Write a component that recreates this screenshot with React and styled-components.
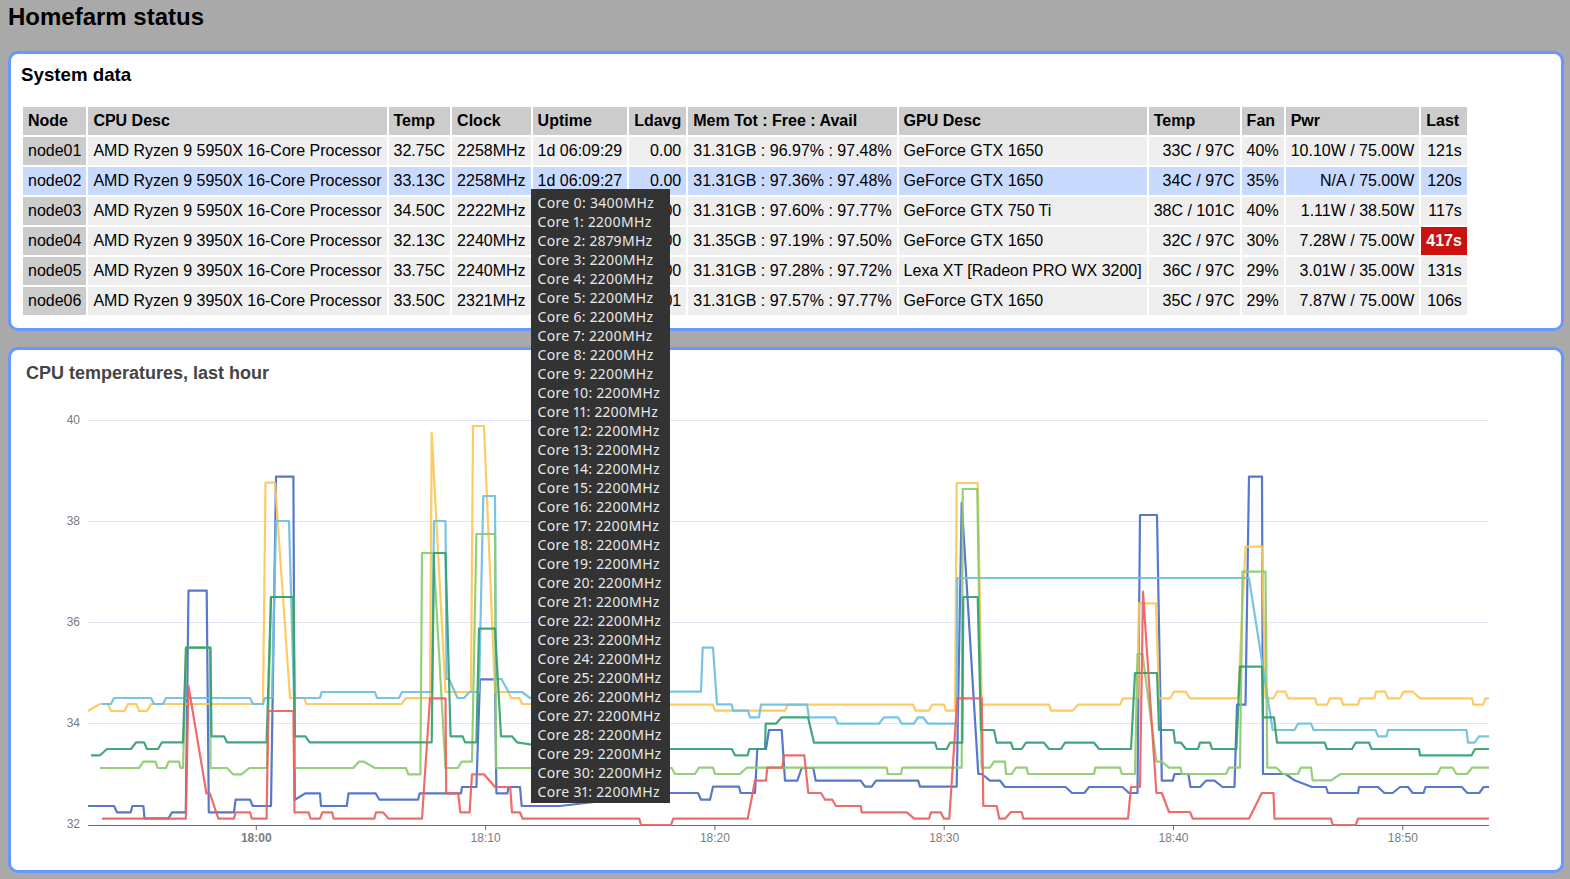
import React from "react";
import styled, { createGlobalStyle } from "styled-components";

const GlobalStyle = createGlobalStyle`
  html, body {
    margin: 0;
    padding: 0;
    background: #a9a9a9;
    font-family: "Liberation Sans", Arial, sans-serif;
  }
`;

const Page = styled.div`
  padding: 0 6px 6px 8px;
`;

const Heading = styled.h1`
  margin: 0;
  height: 51px;
  padding-top: 3px;
  box-sizing: border-box;
  font-size: 24px;
  line-height: 28px;
  font-weight: bold;
  color: #000;
`;

const Panel = styled.div`
  background: #fff;
  border: 3px solid #6699ff;
  border-radius: 10px;
  box-sizing: border-box;
  padding: ${(p) => p.$padding};
  height: ${(p) => p.$height};
  margin-bottom: 16px;
  &:last-child {
    margin-bottom: 0;
  }
`;

const PanelTitle = styled.h3`
  margin: 0 0 19px 0;
  font-size: 18.72px;
  line-height: 22px;
  font-weight: bold;
  color: #000;
`;

const Table = styled.table`
  border-collapse: separate;
  border-spacing: 2px;
  font-size: 16px;
  line-height: 18px;
  color: #000;
  white-space: nowrap;
`;

const Th = styled.th`
  background: #cccccc;
  padding: 5px;
  text-align: left;
  font-weight: bold;
`;

const Td = styled.td`
  position: relative;
  padding: 5px;
  background: ${(p) => (p.$late ? "#cc1111" : p.$hover ? "#c9daff" : "#eeeeee")};
  color: ${(p) => (p.$late ? "#fff" : "#000")};
  font-weight: ${(p) => (p.$late ? "bold" : "normal")};
  text-align: ${(p) => (p.$right ? "right" : "left")};
`;

const NodeCell = styled(Td)`
  background: ${(p) => (p.$hover ? "#c9daff" : "#cccccc")};
`;

const Tooltip = styled.div`
  position: absolute;
  z-index: 10;
  left: -2px;
  top: 22px;
  width: 139px;
  box-sizing: border-box;
  padding: 4px 6px 2px 7px;
  background: #333333;
  color: #e8e8e8;
  font-family: "Noto Sans", sans-serif;
  font-size: 14px;
  font-variant-numeric: proportional-nums;
  letter-spacing: 0.3px;
  line-height: 19px;
  text-align: left;
`;

const ChartTitle = styled.div`
  font-size: 18px;
  line-height: 22px;
  font-weight: bold;
  color: #444444;
  margin-left: 2px;
`;

const ChartSvg = styled.svg`
  display: block;
  margin-top: 6px;
`;

const GridLine = styled.line`
  stroke: #e3e6f2;
  stroke-width: 1;
`;

const AxisLine = styled.line`
  stroke: #6b6b70;
  stroke-width: 1;
`;

const AxisLabel = styled.text`
  fill: #7b7b80;
  font-family: "Liberation Sans", Arial, sans-serif;
  font-size: 12px;
  font-weight: ${(p) => (p.$bold ? "bold" : "normal")};
`;

const SeriesLine = styled.polyline`
  fill: none;
  stroke: ${(p) => p.$color};
  stroke-width: 2.2;
  stroke-opacity: 0.92;
  stroke-linejoin: round;
`;

const columns = [
  "Node", "CPU Desc", "Temp", "Clock", "Uptime", "Ldavg", "Mem Tot : Free : Avail",
  "GPU Desc", "Temp", "Fan", "Pwr", "Last",
];

const nodes = [
  ["node01", "AMD Ryzen 9 5950X 16-Core Processor", "32.75C", "2258MHz", "1d 06:09:29", "0.00", "31.31GB : 96.97% : 97.48%", "GeForce GTX 1650", "33C / 97C", "40%", "10.10W / 75.00W", "121s"],
  ["node02", "AMD Ryzen 9 5950X 16-Core Processor", "33.13C", "2258MHz", "1d 06:09:27", "0.00", "31.31GB : 97.36% : 97.48%", "GeForce GTX 1650", "34C / 97C", "35%", "N/A / 75.00W", "120s"],
  ["node03", "AMD Ryzen 9 5950X 16-Core Processor", "34.50C", "2222MHz", "1d 06:09:30", "0.00", "31.31GB : 97.60% : 97.77%", "GeForce GTX 750 Ti", "38C / 101C", "40%", "1.11W / 38.50W", "117s"],
  ["node04", "AMD Ryzen 9 3950X 16-Core Processor", "32.13C", "2240MHz", "1d 06:09:28", "0.00", "31.35GB : 97.19% : 97.50%", "GeForce GTX 1650", "32C / 97C", "30%", "7.28W / 75.00W", "417s"],
  ["node05", "AMD Ryzen 9 3950X 16-Core Processor", "33.75C", "2240MHz", "1d 06:09:31", "0.00", "31.31GB : 97.28% : 97.72%", "Lexa XT [Radeon PRO WX 3200]", "36C / 97C", "29%", "3.01W / 35.00W", "131s"],
  ["node06", "AMD Ryzen 9 3950X 16-Core Processor", "33.50C", "2321MHz", "1d 06:09:26", "0.01", "31.31GB : 97.57% : 97.77%", "GeForce GTX 1650", "35C / 97C", "29%", "7.87W / 75.00W", "106s"],
];

const rightAligned = [2, 3, 5, 8, 9, 10, 11];

const coreClocks = Array.from({ length: 32 }, (_, i) =>
  i === 0 ? 3400 : i === 2 ? 2879 : 2200
);

// traced from the chart, in page pixels
const blue = "88,806 114,806 117,812.3 130.7,812.3 132.4,806 143.4,806 144.5,818.3 168.6,818.3 172,812.3 185.8,812.3 188.5,590.7 206.7,590.7 208.8,812.3 234,812.3 235.6,799.7 250,799.7 252.8,806 271,806 276,476.7 293.4,476.7 294.8,799.7 305.5,793.3 320,793.3 321,806 346.8,806 348.5,793.3 375.6,793.3 379.4,799.7 418,799.7 419.7,793.3 461,793.3 462,787 476.4,787 480,679.3 495,679.3 496.4,793.3 507.4,793.3 508.4,787 520,787 521.7,806 538,806 560,806 670.7,793 698,793 701,799.7 710,799.7 713,786.7 739,786.7 740.7,793 755,793 757.3,749 766,749 769,730 781.7,730 785,780.7 797.3,780.7 801.7,768 813.3,768 815.7,780.7 860.7,780.7 865,786.7 871.7,786.7 876,780.7 918.3,780.7 920,786.7 956.7,786.7 961.7,502.7 978.3,774 981.7,774 990,780.7 1000,780.7 1005,787 1065.5,787 1072,793 1084.4,793 1089,787 1122.5,787 1129,793 1137.5,793 1140,515 1157,515 1161.8,780.7 1172.7,780.7 1174.5,774 1188.4,774 1190.5,787 1200,787 1206,780.7 1214.5,780.7 1222.5,787 1234.5,787 1237,704.7 1245.5,704.7 1249,476.7 1262,476.7 1263,774 1285.5,774 1294.5,780.3 1312,787 1326,787 1328,793 1358,793 1359,787 1378,787 1384.4,793 1392.7,793 1400,787 1408,787 1412.7,793 1423.6,793 1425.5,787 1461.8,787 1467.3,793 1479.3,793 1483.6,787 1489,787";

const yellow = "88,711 100,704 108,704 111,711 124.5,711 128,704 136.5,704 139,711 147,711 151,704 263,704 265.5,482.7 275,482.7 290,698 304.5,698 306,704 401.5,704 406,698 430,698 431.7,432.7 445.5,692 471,692 473,426 484,426 495,692 508.5,692 511,698 519.5,698 522,704 560,704 671.7,704.7 713,704.7 715,710.7 785,710.7 787.7,704.7 913,704.7 915.7,710.7 929,710.7 932,704.7 944,704.7 946,710.7 955,710.7 956.7,483 977.7,483 981.7,704.7 1049,704.7 1051,710.7 1072.7,710.7 1078,704.7 1120,704.7 1123,698.3 1137.5,698.3 1139,603.3 1156,603.3 1159,698.3 1170,698.3 1174,691.7 1185.5,691.7 1190,698.3 1238,698.3 1245.5,546.7 1262,546.7 1265.5,698.3 1273.5,698.3 1277,691.7 1285.5,691.7 1288,698.3 1315,698.3 1317,704.7 1327,704.7 1330,698.3 1341,698.3 1343,704.7 1358,704.7 1360,698.3 1374.5,698.3 1376,691.7 1385,691.7 1388,698.3 1400,698.3 1403.6,691.7 1412.7,691.7 1420,698.3 1472,698.3 1473.5,704.7 1483,704.7 1485.5,698.3 1489,698.3";

const skyBlue = "102,704 111,704 114,698 151,698 154,704 163,704 166,698 250,698 253,704 263,704 265,698 272,698 276,521 289,521 294,698 320,698 321.6,692 375,692 377,698 399,698 402,692 432,692 434,521 445.5,521 446.5,679 449,679 457.5,698 464,698 469.5,692 479,692 483.3,496 495,496 496,679 501.5,679 508.5,692 522,692 530,698 560,691.7 701,691.7 702.7,647.7 713,647.7 717,704.3 731.7,704.3 733,710.7 748,710.7 750,717.3 759,717.3 761,704.7 807,704.7 809,717.3 835,717.3 838,723.7 879,723.7 884,717.3 898,717.3 901.7,723.7 914,723.7 918,717.3 923,717.3 928,723.7 956.7,723.7 957.3,578 1249,578 1272.7,730 1294.5,730 1298,723.7 1311,723.7 1313.5,730 1375.6,730 1378,736.3 1386.5,736.3 1388,730 1466.5,730 1468,742.7 1474.5,742.7 1479,736.3 1489,736.3";

const lime = "100,768 139,768 143.4,761.7 155.5,761.7 157.5,768 166,768 168.6,761.7 179,761.7 180.6,768 183,768 186,647.7 210,647.7 210.5,768 227,768 233,774.3 241.5,774.3 249.4,768 267,768 271,597 293.4,597 295,768 353.3,768 358.8,761.7 364,761.7 375,768 406,768 408.3,774.3 420.4,774.3 422,553 433.4,553 445.5,768 458,768 461.6,761.7 472,761.7 476.4,534 495,534 496,768 560,768 671.7,768 675,774 695,774 699,767.7 713,767.7 715,774 740,774 746.7,767.7 886.7,767.7 887.7,774 901,774 902.3,767.7 961.7,767.7 962.7,489 977.3,489 981.7,767.7 990,767.7 994,761.7 1005,761.7 1006,774 1011.7,774 1016,767.7 1026.7,767.7 1028,774 1094,774 1095.3,767.7 1120,767.7 1121.8,774 1135,774 1137.5,654 1142.5,654 1156.4,761.7 1161.8,761.7 1169,767.7 1180.7,767.7 1181.8,774 1226,774 1229,767.7 1240,767.7 1242.5,571.7 1265.5,571.7 1267.3,767.7 1276.4,767.7 1283,774 1298,774 1300.7,767.7 1311,767.7 1312.7,780.3 1331,780.3 1340.7,774 1437.5,774 1440.7,767.7 1452.7,767.7 1456.4,774 1467,774 1472,767.7 1489,767.7";

const green = "91,755.3 100,755.3 107,749 131,749 136,742.3 144,742.3 147,749 158,749 162,742.3 183,742.3 186,647.7 210.5,647.7 211.5,736.3 224,736.3 227,742.3 266.6,742.3 271,597 293.4,597 294.8,736.3 305.5,736.3 309.6,742.3 431.7,742.3 434,553 445.5,553 450.6,736.3 462.7,736.3 465,742.3 476.4,742.3 479,628.7 495,628.7 501,736.3 512,736.3 517,742.3 560,749 731.7,749 735,755.3 747.7,755.3 749.3,749 765,749 765.7,723.7 776,723.7 781.7,717.3 808,717.3 814,742.7 935,742.7 937,749 946.7,749 950,742.7 962.3,742.7 963.3,597 977.7,597 981,730 994,730 996.7,742.7 1011,742.7 1013,749 1021.7,749 1026,742.7 1044,742.7 1049,749 1061,749 1065,742.7 1094,742.7 1099,749 1131,749 1135,673 1157,673 1159,730 1173.5,730 1175,742.7 1181,742.7 1186,749 1198,749 1200,742.7 1210,742.7 1212,749 1236.4,749 1240,666.7 1262,666.7 1263,717.3 1274,717.3 1277,742.7 1324.7,742.7 1327,749 1352,749 1355.6,742.7 1369,742.7 1371.6,749 1419,749 1420,755.3 1471.6,755.3 1475,749 1489,749";

const red = "102,818.7 185.8,818.7 188.5,686 206.4,793.3 209.8,793.3 218.4,818.7 234,818.7 235.6,812.3 250,812.3 251.8,818.7 266.6,818.7 268.3,711 293.4,711 294.5,812.3 308.6,812.3 310.6,818.7 320,818.7 322.3,812.3 332,812.3 333.7,818.7 374.3,818.7 376,812.3 382.9,812.3 388.7,818.7 422,818.7 430,698.3 445.5,698.3 446.2,793.3 458.2,793.3 460.3,812.3 469.6,812.3 472,774.3 484,774.3 495,787 510.2,787 512,812.3 520,812.3 522.7,818.7 639.3,818.7 641,825 671,825 673.3,818.7 747.7,818.7 755,780.7 766,780.7 767.3,767.7 782.3,767.7 784,755.3 804.3,755.3 808.3,793 821,793 825,799.7 832.3,799.7 836,806 860.7,806 861.7,812.3 906.7,812.3 914.3,818.7 929,818.7 931,812.3 940.7,812.3 944,818.7 949.3,818.7 957.3,698.3 981.7,698.3 983.3,806 996.7,806 999.3,818.7 1005,818.7 1011,812 1021.7,812 1023.3,818.7 1128,818.7 1131,787 1140,787 1143,591.7 1156.4,793 1161.8,793 1169,812 1190,812 1192.7,818.7 1249,818.7 1261.8,793 1273.5,793 1274.5,818.7 1331,818.7 1332.7,825 1355.6,825 1358,818.7 1489,818.7";

const series = [
  { color: "#4a6cc8", points: blue },
  { color: "#ffc655", points: yellow },
  { color: "#6cbfe0", points: skyBlue },
  { color: "#8ccb6e", points: lime },
  { color: "#33a06f", points: green },
  { color: "#ee6060", points: red },
];

const gridY = [
  { y: 420.5, label: "40" },
  { y: 521.5, label: "38" },
  { y: 622.5, label: "36" },
  { y: 723.5, label: "34" },
];

const ticks = [
  { x: 256.3, label: "18:00", bold: true },
  { x: 485.6, label: "18:10" },
  { x: 714.9, label: "18:20" },
  { x: 944.2, label: "18:30" },
  { x: 1173.5, label: "18:40" },
  { x: 1402.8, label: "18:50" },
];

const TempChart = () => {
  return (
    <ChartSvg width="1523" height="476" viewBox="24 390 1523 476">
      <defs>
        <clipPath id="plot">
          <rect x="88" y="400" width="1401" height="427" />
        </clipPath>
      </defs>
      {gridY.map((g) => (
        <g key={g.label}>
          <GridLine x1="88" x2="1489" y1={g.y} y2={g.y} />
          <AxisLabel x="80" y={g.y + 3.5} textAnchor="end">{g.label}</AxisLabel>
        </g>
      ))}
      <AxisLabel x="80" y="828" textAnchor="end">32</AxisLabel>
      <AxisLine x1="88" x2="1489" y1="825.5" y2="825.5" />
      {ticks.map((t) => (
        <g key={t.label}>
          <AxisLine x1={t.x} x2={t.x} y1="826" y2="830" />
          <AxisLabel x={t.x} y="842" textAnchor="middle" $bold={t.bold}>{t.label}</AxisLabel>
        </g>
      ))}
      <g clipPath="url(#plot)">
        {series.map((s) => (
          <SeriesLine key={s.color} $color={s.color} points={s.points} />
        ))}
      </g>
    </ChartSvg>
  );
};

export default function App() {
  return (
    <>
      <GlobalStyle />
      <Page>
        <Heading>Homefarm status</Heading>
        <Panel $padding="10px 10px 0 10px" $height="280px">
          <PanelTitle>System data</PanelTitle>
          <Table>
            <thead>
              <tr>
                {columns.map((c, i) => (
                  <Th key={i}>{c}</Th>
                ))}
              </tr>
            </thead>
            <tbody>
              {nodes.map((row, r) => (
                <tr key={row[0]}>
                  {row.map((value, i) => {
                    const hover = r === 1;
                    if (i === 0) {
                      return <NodeCell key={i} $hover={hover}>{value}</NodeCell>;
                    }
                    return (
                      <Td key={i} $hover={hover} $right={rightAligned.includes(i)} $late={value === "417s"}>
                        {value}
                        {hover && i === 4 && (
                          <Tooltip>
                            {coreClocks.map((mhz, core) => (
                              <div key={core}>Core {core}: {mhz}MHz</div>
                            ))}
                          </Tooltip>
                        )}
                      </Td>
                    );
                  })}
                </tr>
              ))}
            </tbody>
          </Table>
        </Panel>
        <Panel $padding="12px 13px 0 13px" $height="526px">
          <ChartTitle>CPU temperatures, last hour</ChartTitle>
          <TempChart />
        </Panel>
      </Page>
    </>
  );
}
